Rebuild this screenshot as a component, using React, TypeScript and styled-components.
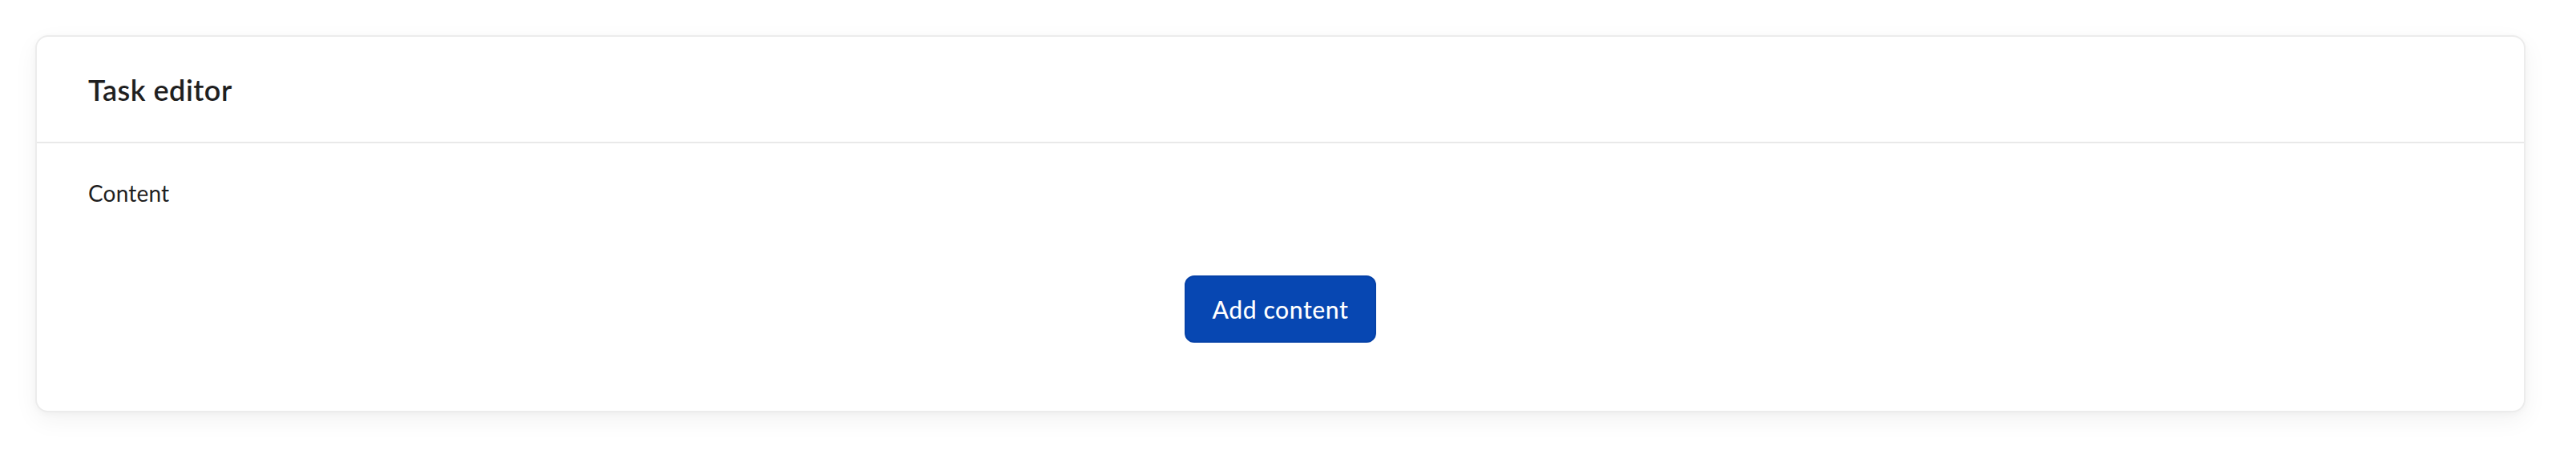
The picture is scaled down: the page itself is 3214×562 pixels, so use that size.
import React from "react";
import styled, { createGlobalStyle } from "styled-components";

const GlobalStyle = createGlobalStyle`
  html, body {
    margin: 0;
    padding: 0;
    background: #ffffff;
  }
  body {
    font-family: "Lato", "Noto Sans", "Liberation Sans", sans-serif;
    color: #1f1f1f;
  }
`;

const Page = styled.div`
  padding: 44px 63px 44px 44px;
`;

const Card = styled.section`
  background: #ffffff;
  border: 2px solid #ececec;
  border-radius: 16px;
  box-shadow: 0 10px 30px rgba(0, 0, 0, 0.05), 0 2px 8px rgba(0, 0, 0, 0.03);
  overflow: hidden;
`;

const Header = styled.header`
  height: 131px;
  display: flex;
  align-items: center;
  padding: 0 64px;
  border-bottom: 2px solid #e9e9e9;
`;

const Title = styled.h1`
  margin: 0;
  font-size: 36px;
  line-height: 44px;
  font-weight: 600;
  letter-spacing: 0.5px;
  color: #1f1f1f;
`;

const Body = styled.div`
  padding: 42px 64px 85px;
  display: flex;
  flex-direction: column;
  gap: 83px;
`;

const Label = styled.div`
  font-size: 28px;
  line-height: 40px;
  font-weight: 400;
  letter-spacing: 0.2px;
  color: #1f1f1f;
`;

const Actions = styled.div`
  display: flex;
  justify-content: center;
`;

const Button = styled.button`
  height: 84px;
  width: 239px;
  box-sizing: border-box;
  border: 2px solid #0642a8;
  border-radius: 12px;
  background: #0747b2;
  color: #ffffff;
  font-family: inherit;
  font-size: 30px;
  font-weight: 500;
  letter-spacing: 0.6px;
  cursor: pointer;
  display: flex;
  align-items: center;
  justify-content: center;
`;

export default function App() {
  return (
    <>
      <GlobalStyle />
      <Page>
        <Card>
          <Header>
            <Title>Task editor</Title>
          </Header>
          <Body>
            <Label>Content</Label>
            <Actions>
              <Button type="button">Add content</Button>
            </Actions>
          </Body>
        </Card>
      </Page>
    </>
  );
}
